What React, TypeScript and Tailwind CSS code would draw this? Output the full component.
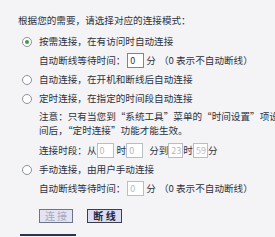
import { useState } from "react";

const font = { fontFamily: '"Noto Sans CJK SC", "Noto Sans", sans-serif' };

function Radio({ checked, onClick }: { checked: boolean; onClick: () => void }) {
  return (
    <span
      onClick={onClick}
      className="flex h-[10px] w-[10px] shrink-0 items-center justify-center rounded-full border border-[#8c919c] bg-white"
    >
      {checked && <span className="h-[4px] w-[4px] rounded-full bg-[#3f9a4a]" />}
    </span>
  );
}

function Box({ value, disabled, w = "w-[17px]" }: { value: string; disabled?: boolean; w?: string }) {
  return (
    <span
      className={`flex h-[15px] ${w} shrink-0 items-center border bg-white pl-[2px] text-[9px] leading-none ${
        disabled ? "border-[#b9bdc8] text-[#b4b8c2]" : "border-[#7b8494] text-[#2c3240]"
      }`}
    >
      {value}
    </span>
  );
}

export default function App() {
  const [mode, setMode] = useState(0);

  return (
    <div
      style={font}
      className="h-[237px] w-[275px] overflow-hidden bg-[#f4f4f6] pl-[18px] pt-[11px] text-[9.6px] text-[#2c3240]"
    >
      <div className="flex h-[19px] items-center whitespace-nowrap">根据您的需要，请选择对应的连接模式：</div>

      <div className="mt-[2px] flex h-[19px] items-center gap-[7px] pl-[4px] whitespace-nowrap">
        <Radio checked={mode === 0} onClick={() => setMode(0)} />
        <span>按需连接，在有访问时自动连接</span>
      </div>
      <div className="flex h-[19px] items-center pl-[21px] whitespace-nowrap">
        <span>自动断线等待时间：</span>
        <span className="ml-[2px]">
          <Box value="0" />
        </span>
        <span className="ml-[2px]">分</span>
        <span className="ml-[3px]">（0 表示不自动断线）</span>
      </div>

      <div className="flex h-[19px] items-center gap-[7px] pl-[4px] whitespace-nowrap">
        <Radio checked={mode === 1} onClick={() => setMode(1)} />
        <span>自动连接，在开机和断线后自动连接</span>
      </div>

      <div className="flex h-[19px] items-center gap-[7px] pl-[4px] whitespace-nowrap">
        <Radio checked={mode === 2} onClick={() => setMode(2)} />
        <span>定时连接，在指定的时间段自动连接</span>
      </div>
      <div className="mt-[1px] pl-[21px] whitespace-nowrap leading-[14px]">
        <div>注意：只有当您到“系统工具”菜单的“时间设置”项设</div>
        <div>间后，“定时连接”功能才能生效。</div>
      </div>
      <div className="mt-[4px] flex h-[19px] items-center pl-[21px] whitespace-nowrap">
        <span>连接时段：从</span>
        <Box value="0" disabled />
        <span className="ml-[3px]">时</span>
        <Box value="0" disabled />
        <span className="ml-[6px]">分到</span>
        <Box value="23" disabled w="w-[15px]" />
        <span>时</span>
        <Box value="59" disabled w="w-[15px]" />
        <span>分</span>
      </div>

      <div className="flex h-[19px] items-center gap-[7px] pl-[4px] whitespace-nowrap">
        <Radio checked={mode === 3} onClick={() => setMode(3)} />
        <span>手动连接，由用户手动连接</span>
      </div>
      <div className="flex h-[19px] items-center pl-[21px] whitespace-nowrap">
        <span>自动断线等待时间：</span>
        <span className="ml-[2px]">
          <Box value="0" disabled />
        </span>
        <span className="ml-[2px]">分</span>
        <span className="ml-[3px]">（0 表示不自动断线）</span>
      </div>

      <div className="mt-[11px] flex gap-[14px] pl-[21px]">
        <button
          disabled
          className="flex h-[14px] w-[34px] items-center justify-center border border-[#6e7388] bg-[#e3e3f3] text-[10px] leading-none text-[#a6a9bb]"
        >
          {"连\u00a0接"}
        </button>
        <button className="flex h-[14px] w-[35px] items-center justify-center border border-[#3a3d4c] bg-[#dcdcf2] text-[10px] font-bold leading-none text-[#23273a]">
          {"断\u00a0线"}
        </button>
      </div>

      <div className="ml-[2px] mt-[11px] h-[2px] w-[56px] bg-[#2b3350]" />
    </div>
  );
}
